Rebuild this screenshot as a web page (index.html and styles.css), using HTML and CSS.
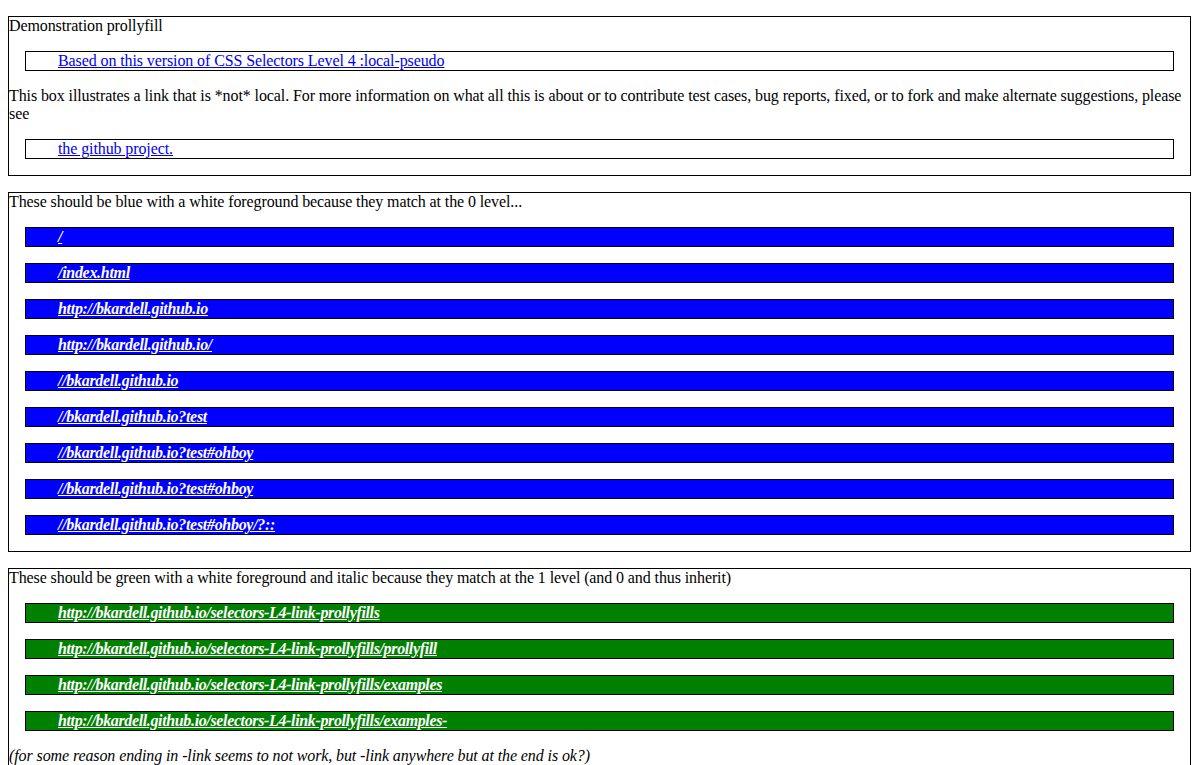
FILE: index.html
```html
<!DOCTYPE html>
<html>
<head>
<meta charset="utf-8">
<title>Demonstration prollyfill</title>
<link rel="stylesheet" href="styles.css">
</head>
<body>
<section class="box">
  <div class="text">Demonstration prollyfill</div>
  <ul class="links">
    <li class="item"><a href="#">Based on this version of CSS Selectors Level 4 :local-pseudo</a></li>
  </ul>
  <div class="text">This box illustrates a link that is *not* local. For more information on what all this is about or to contribute test cases, bug reports, fixed, or to fork and make alternate suggestions, please see</div>
  <ul class="links">
    <li class="item"><a href="#">the github project.</a></li>
  </ul>
</section>
<section class="box">
  <div class="text">These should be blue with a white foreground because they match at the 0 level...</div>
  <ul class="links level0">
    <li class="item"><a href="#">/</a></li>
    <li class="item"><a href="#">/index.html</a></li>
    <li class="item"><a href="#">http://bkardell.github.io</a></li>
    <li class="item"><a href="#">http://bkardell.github.io/</a></li>
    <li class="item"><a href="#">//bkardell.github.io</a></li>
    <li class="item"><a href="#">//bkardell.github.io?test</a></li>
    <li class="item"><a href="#">//bkardell.github.io?test#ohboy</a></li>
    <li class="item"><a href="#">//bkardell.github.io?test#ohboy</a></li>
    <li class="item"><a href="#">//bkardell.github.io?test#ohboy/?::</a></li>
  </ul>
</section>
<section class="box">
  <div class="text">These should be green with a white foreground and italic because they match at the 1 level (and 0 and thus inherit)</div>
  <ul class="links level1">
    <li class="item"><a href="#">http://bkardell.github.io/selectors-L4-link-prollyfills</a></li>
    <li class="item"><a href="#">http://bkardell.github.io/selectors-L4-link-prollyfills/prollyfill</a></li>
    <li class="item"><a href="#">http://bkardell.github.io/selectors-L4-link-prollyfills/examples</a></li>
    <li class="item"><a href="#">http://bkardell.github.io/selectors-L4-link-prollyfills/examples-</a></li>
  </ul>
  <div class="text note">(for some reason ending in -link seems to not work, but -link anywhere but at the end is ok?)</div>
  <ul class="links level1">
    <li class="item"><a href="#">http://bkardell.github.io/selectors-L4-link-prollyfills/examples-link-test</a></li>
  </ul>
</section>
</body>
</html>
```
FILE: styles.css
```css
html, body {
  background: #ffffff;
}
html {
  margin: 0;
  padding: 0;
}
body {
  margin: 0;
  padding: 0 8px;
  font-family: "Liberation Serif", "Times New Roman", serif;
  font-size: 16px;
  line-height: 18px;
  letter-spacing: -0.1px;
  color: #000000;
}
.box {
  border: 1px solid #000000;
  margin: 16px 0;
}
.text {
  margin: 0;
}
.note {
  font-style: italic;
}
.links {
  list-style: none;
  margin: 0;
  padding: 0;
}
.item {
  margin: 16px;
  border: 1px solid #000000;
  padding-left: 32px;
}
.item a {
  color: #0000ee;
  text-decoration: underline;
}
.level0 .item {
  background: #0000ff;
}
.level1 .item {
  background: #008000;
}
.level0 .item a,
.level1 .item a {
  color: #ffffff;
  font-style: italic;
  font-weight: bold;
}
.level0 .item a {
  letter-spacing: -0.3px;
}
.level1 .item a {
  letter-spacing: -0.36px;
}
```
